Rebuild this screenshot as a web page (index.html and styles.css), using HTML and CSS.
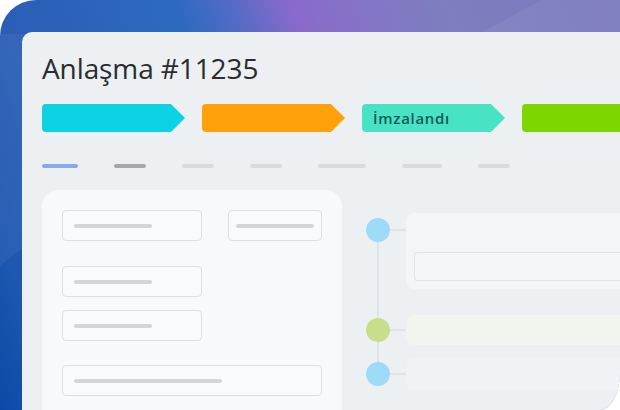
FILE: index.html
```html
<!DOCTYPE html>
<html lang="tr">
<head>
<meta charset="utf-8">
<title>Anlaşma #11235</title>
<link rel="stylesheet" href="styles.css">
</head>
<body>
<div class="frame">
  <svg class="waves" width="620" height="410" viewBox="0 0 620 410" aria-hidden="true">
    <polygon points="0,266 40,234 40,34 0,34" fill="#ffffff" opacity="0.05"/>
    <polygon points="468,40 560,-10 640,-10 640,40" fill="#ffffff" opacity="0.06"/>
  </svg>
  <div class="panel">
    <h1 class="title">Anlaşma #11235</h1>
    <div class="stages">
      <div class="stage cyan"></div>
      <div class="stage orange"></div>
      <div class="stage teal">İmzalandı</div>
      <div class="stage lime"></div>
    </div>
    <div class="tabs">
      <span class="tab active w36"></span>
      <span class="tab dark w32"></span>
      <span class="tab w32"></span>
      <span class="tab w32"></span>
      <span class="tab w48"></span>
      <span class="tab w40"></span>
      <span class="tab w32"></span>
    </div>
    <div class="main">
      <div class="form-card">
        <div class="row r1">
          <div class="field w140"><span class="ph w78"></span></div>
          <div class="field w94 narrow"><span class="ph w78"></span></div>
        </div>
        <div class="row r2">
          <div class="field w140"><span class="ph w78"></span></div>
        </div>
        <div class="row r3">
          <div class="field w140"><span class="ph w78"></span></div>
        </div>
        <div class="row r4">
          <div class="field w260"><span class="ph w148"></span></div>
        </div>
      </div>
      <div class="timeline">
        <div class="item i1">
          <span class="dot blue"></span>
          <span class="link"></span>
          <div class="entry e1">
            <div class="entry-input"></div>
          </div>
        </div>
        <div class="item i2">
          <span class="dot green"></span>
          <span class="link"></span>
          <div class="entry e2"></div>
        </div>
        <div class="item i3">
          <span class="dot blue"></span>
          <span class="link"></span>
          <div class="entry e3"></div>
        </div>
      </div>
    </div>
  </div>
</div>
</body>
</html>
```
FILE: styles.css
```css
html, body {
  margin: 0;
  padding: 0;
  background: #ffffff;
  overflow: hidden;
}

.frame {
  position: relative;
  width: 620px;
  height: 410px;
  box-sizing: border-box;
  padding: 32px 0 0 22px;
  display: flex;
  overflow: hidden;
  border-radius: 36px 0 20px 0 / 36px 0 38px 0;
  background: linear-gradient(70deg, #0a4aa6 0%, #1d57b0 8%, #2b5eb7 20%, #2d6abf 42%, #4d6bc5 48%, #8a6acb 57%, #7d7fc0 77%, #7977bd 100%);
}

.waves {
  position: absolute;
  left: 0;
  top: 0;
}

.panel {
  position: relative;
  flex: 1;
  min-width: 0;
  background: #ecf0f3;
  border-top-left-radius: 10px;
  padding: 0 0 0 20px;
  overflow: hidden;
  font-family: "Open Sans", "Noto Sans", sans-serif;
}

.title {
  margin: 0;
  padding-top: 17px;
  font-size: 28px;
  line-height: 38px;
  font-weight: 400;
  color: #2a2c2e;
  letter-spacing: -0.1px;
}

.stages {
  display: flex;
  gap: 17px;
  margin-top: 17px;
}

.stage {
  flex: 0 0 143px;
  height: 28px;
  border-radius: 4px 0 0 4px;
  clip-path: polygon(0 0, calc(100% - 14px) 0, 100% 50%, calc(100% - 14px) 100%, 0 100%);
  box-sizing: border-box;
  padding-left: 11px;
  font-size: 15px;
  font-weight: 600;
  line-height: 28px;
  color: #135a55;
  letter-spacing: 0.7px;
}

.cyan { background: #0bd3e3; }
.orange { background: #ffa10a; }
.teal { background: #48e3c5; }
.lime { background: #7dd600; }

.tabs {
  display: flex;
  gap: 36px;
  margin-top: 32px;
}

.tab {
  height: 4px;
  border-radius: 2px;
  background: #d8dcdf;
}

.tab.active { background: #88a8f2; }
.tab.dark { background: #a5a7a9; }

.w32 { width: 32px; }
.w36 { width: 36px; }
.w40 { width: 40px; }
.w48 { width: 48px; }

.main {
  display: flex;
  gap: 24px;
  margin-top: 22px;
}

.form-card {
  flex: 0 0 300px;
  height: 260px;
  box-sizing: border-box;
  background: #f7f9fa;
  border-radius: 16px 16px 0 0;
  padding: 20px 20px 0 20px;
  display: flex;
  flex-direction: column;
}

.row {
  display: flex;
  gap: 26px;
}

.r2 { margin-top: 25px; }
.r3 { margin-top: 13px; }
.r4 { margin-top: 24px; }

.field {
  height: 31px;
  box-sizing: border-box;
  border: 1px solid #dcdfe2;
  border-radius: 4px;
  background: #f8fafb;
  display: flex;
  align-items: center;
  padding-left: 11px;
}

.field.narrow { padding-left: 7px; }

.w140 { width: 140px; }
.w94 { width: 94px; }
.w260 { width: 260px; }

.ph {
  height: 4px;
  border-radius: 2px;
  background: #d3d5d8;
}

.w78 { width: 78px; }
.w148 { width: 148px; }

.timeline {
  position: relative;
  flex: 1;
  padding-top: 23px;
  display: flex;
  flex-direction: column;
}

.timeline::before {
  content: "";
  position: absolute;
  left: 11px;
  top: 40px;
  height: 146px;
  width: 2px;
  background: #dde3e8;
}

.item {
  display: flex;
  align-items: flex-start;
}

.i2 { margin-top: 26px; }
.i3 { margin-top: 13px; }

.dot {
  position: relative;
  flex: 0 0 24px;
  height: 24px;
  border-radius: 50%;
}

.dot.blue { background: #9ddcf7; }
.dot.green { background: #c7df8a; }

.i1 .dot { margin-top: 5px; }
.i2 .dot { margin-top: 3px; }
.i3 .dot { margin-top: 4px; }

.link {
  flex: 0 0 16px;
  height: 2px;
  background: #dfe4e8;
}

.i1 .link { margin-top: 16px; }
.i2 .link { margin-top: 14px; }
.i3 .link { margin-top: 15px; }

.entry {
  flex: 0 0 260px;
  border-radius: 8px 0 0 8px;
  box-sizing: border-box;
}

.e1 {
  height: 76px;
  background: #f3f6f8;
  padding: 39px 0 0 8px;
}

.entry-input {
  height: 29px;
  box-sizing: border-box;
  border: 1px solid #dfe3e6;
  border-right: 0;
  border-radius: 4px 0 0 4px;
  background: #f4f6f8;
}

.e2 {
  height: 30px;
  background: #f2f5ed;
}

.e3 {
  height: 32px;
  background: #eff3f6;
}
```
